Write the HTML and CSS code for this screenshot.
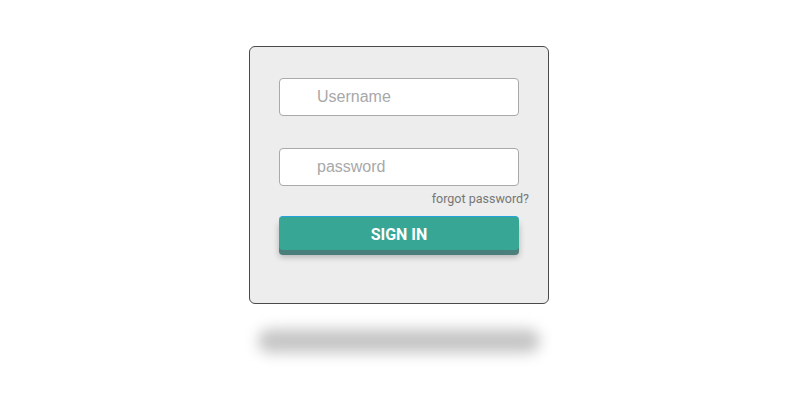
FILE: index.html
```html
<!DOCTYPE html>
<html lang="en">
<head>
  <meta charset="UTF-8" />
  <meta name="viewport" content="width=device-width, initial-scale=1.0" />
  <title>Login</title>
  <link rel="stylesheet" href="styles.css">
</head>
<body>
  <div class="wrap">
    <form class="login-box">
      <input type="text" class="field" placeholder="Username" />
      <input type="password" class="field field-pass" placeholder="password" />
      <a href="#" class="forgot">forgot password?</a>
      <button type="submit" class="btn">SIGN IN</button>
    </form>
    <div class="floor-shadow"></div>
  </div>
</body>
</html>
```

FILE: styles.css
```css
* {
  box-sizing: border-box;
}
body {
  margin: 0;
  padding: 0;
  background: #fff;
  font-family: 'Liberation Sans', Arial, sans-serif;
}
.wrap {
  display: flex;
  flex-direction: column;
  align-items: center;
  padding: 46px 2px 40px 0;
}
.login-box {
  width: 300px;
  display: flex;
  flex-direction: column;
  padding: 31px 29px 53px;
  background: #ecedec;
  border: 1px solid #4a4a4a;
  border-radius: 6px;
  margin: 0;
}
.field {
  width: 240px;
  height: 38px;
  padding: 0 10px 0 37px;
  border: 1px solid #a9a9a9;
  border-radius: 4px;
  background: #fff;
  font-family: 'Liberation Sans', Arial, sans-serif;
  font-size: 16px;
  color: #555;
  outline: none;
}
.field::placeholder {
  color: #a8a8a8;
}
.field-pass {
  margin-top: 32px;
}
.forgot {
  align-self: flex-end;
  margin: 6px -10px 0 0;
  height: 14px;
  line-height: 14px;
  font-family: Roboto, sans-serif;
  font-size: 12.5px;
  color: #767676;
  text-decoration: none;
}
.btn {
  margin-top: 10px;
  width: 240px;
  height: 34px;
  border: none;
  border-top: 1px solid #27a3dc;
  border-radius: 4px;
  background: #37a695;
  color: #fff;
  font-family: Roboto, sans-serif;
  font-weight: bold;
  font-size: 16px;
  padding: 2px 0 0;
  cursor: pointer;
  box-shadow: 0 5px 0 #4b7f7b, 0 7px 6px rgba(0,0,0,0.25);
}
.floor-shadow {
  margin-top: 25px;
  width: 282px;
  height: 24px;
  border-radius: 12px;
  background: #c6c6c6;
  filter: blur(7px);
}
```
